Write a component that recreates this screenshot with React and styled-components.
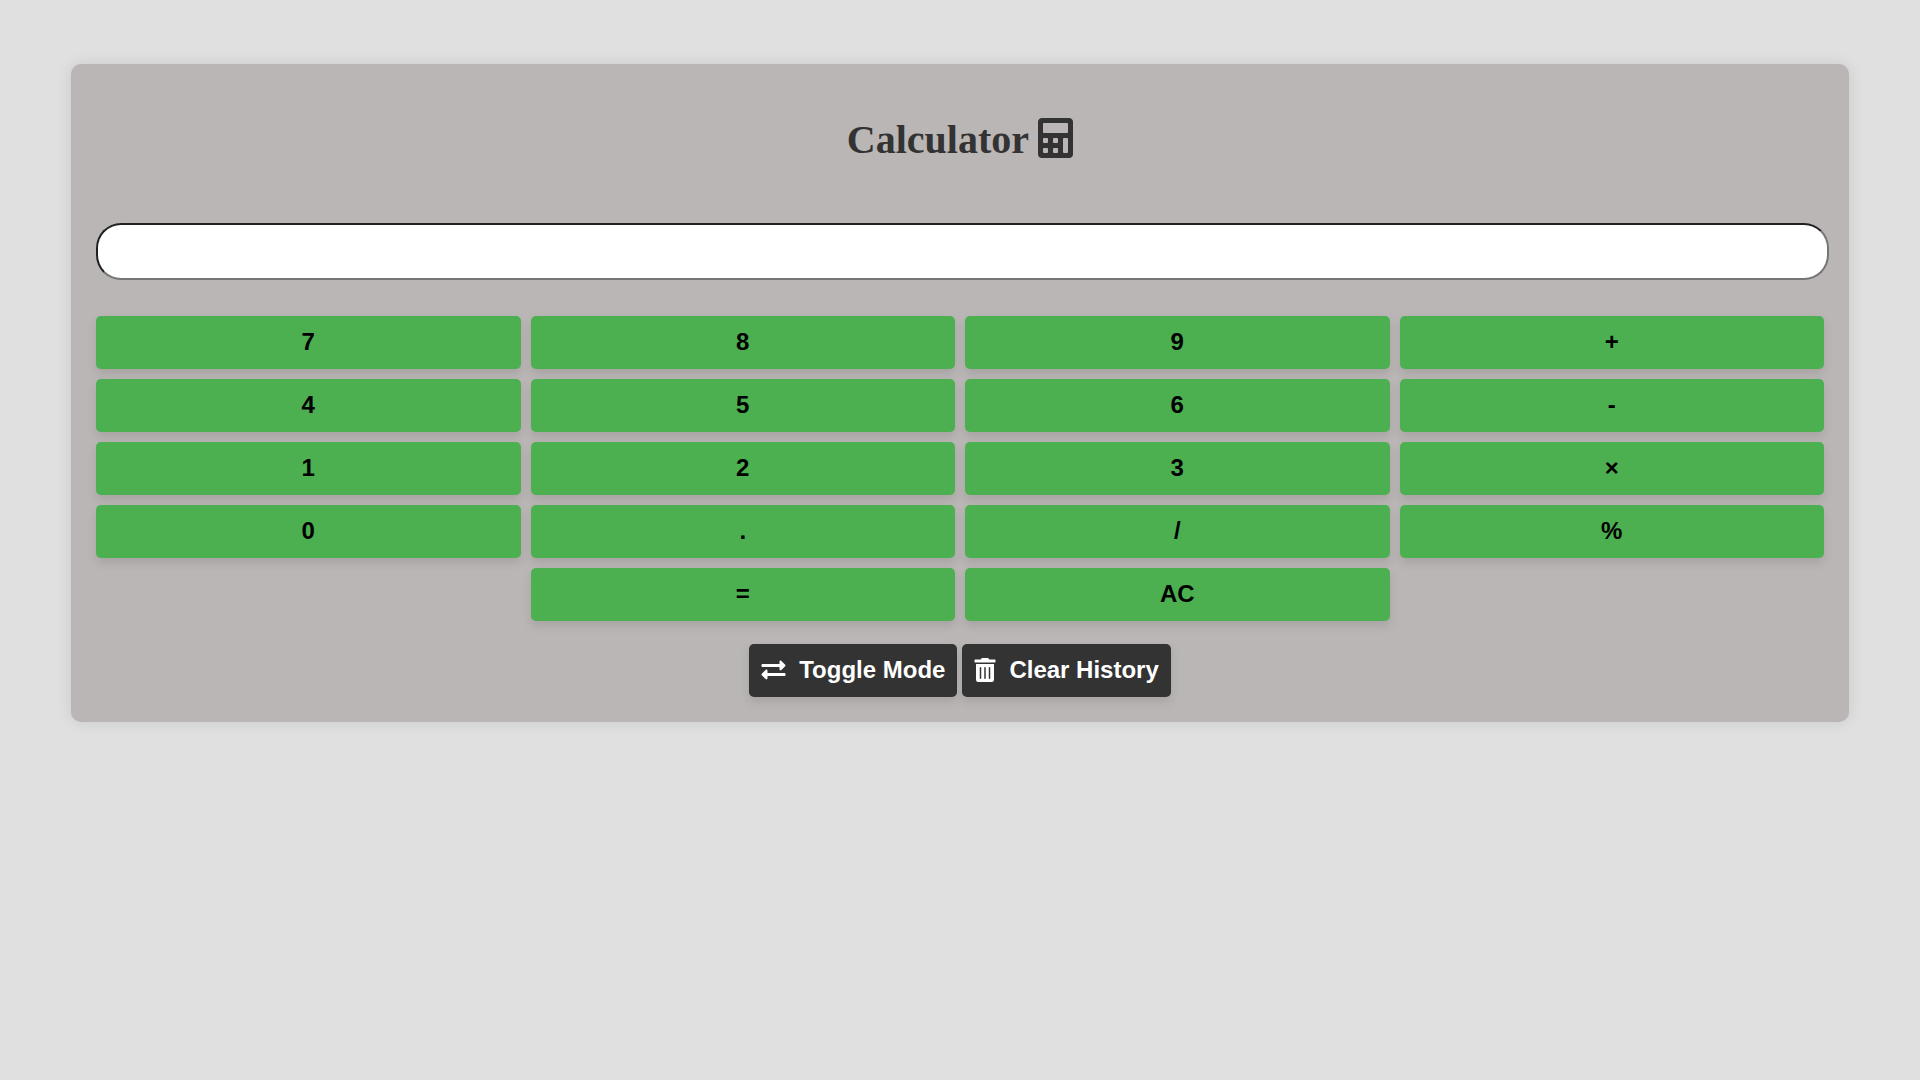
import React, { useState } from "react";
import styled, { createGlobalStyle } from "styled-components";
import { FaCalculator, FaExchangeAlt, FaTrashAlt } from "react-icons/fa";

const GlobalStyle = createGlobalStyle`
  body {
    margin: 0;
    background: #e0e0e0;
    font-family: "Liberation Serif", "Times New Roman", serif;
  }
`;

const Card = styled.main`
  display: flex;
  flex-direction: column;
  margin: 64px 71px;
  padding: 25px;
  border-radius: 10px;
  background: #bab6b5;
  box-shadow: 0 0 15px rgba(0, 0, 0, 0.1);
`;

const Title = styled.h1`
  margin: 28px 0 60px;
  color: #333;
  font-size: 40px;
  line-height: 46px;
  text-align: center;

  svg {
    width: 35px;
    vertical-align: -5px;
  }
`;

const Display = styled.input`
  box-sizing: border-box;
  width: calc(100% + 5px);
  height: 57px;
  padding: 0 20px;
  border: 2px inset #767676;
  border-radius: 25px;
  background: #fff;
  color: #000;
  font: 24px "Liberation Sans", Arial, sans-serif;
  text-align: right;
`;

const Keypad = styled.div`
  display: grid;
  grid-template-columns: repeat(4, 1fr);
  gap: 10px;
  margin: 36px 0 23px;
`;

const Button = styled.button`
  padding: 12px 12px 14px;
  border: none;
  border-radius: 5px;
  background: #4caf50;
  box-shadow: 0 5px 10px rgba(0, 0, 0, 0.1);
  color: #000;
  font: bold 24px/27px "Liberation Sans", Arial, sans-serif;
  cursor: pointer;
`;

const Key = styled(Button)`
  grid-column-start: ${({ $column }) => $column || "auto"};
`;

const Actions = styled.div`
  display: flex;
  justify-content: center;
  gap: 5px;
`;

const ActionButton = styled(Button)`
  display: flex;
  align-items: center;
  gap: 13px;
  background: #333;
  color: #fff;

  svg {
    width: ${({ $iconWidth }) => $iconWidth};
    height: 24px;
  }
`;

const KEYS = ["7", "8", "9", "+", "4", "5", "6", "-", "1", "2", "3", "×", "0", ".", "/", "%"];

function evaluate(expression) {
  const source = expression.replace(/×/g, "*");
  if (!/^[\d+\-*/%.\s]+$/.test(source)) return "";
  try {
    return String(Function(`return (${source})`)());
  } catch {
    return "Error";
  }
}

export default function App() {
  const [value, setValue] = useState("");

  return (
    <>
      <GlobalStyle />
      <Card>
        <Title>
          Calculator <FaCalculator aria-hidden="true" />
        </Title>
        <Display
          type="text"
          aria-label="Calculator display"
          value={value}
          onChange={(event) => setValue(event.target.value)}
        />
        <Keypad>
          {KEYS.map((key) => (
            <Key key={key} type="button" onClick={() => setValue(value + key)}>
              {key}
            </Key>
          ))}
          <Key $column={2} type="button" onClick={() => setValue(evaluate(value))}>
            =
          </Key>
          <Key type="button" onClick={() => setValue("")}>
            AC
          </Key>
        </Keypad>
        <Actions>
          <ActionButton type="button" $iconWidth="25px">
            <FaExchangeAlt aria-hidden="true" />
            Toggle Mode
          </ActionButton>
          <ActionButton type="button" $iconWidth="22px">
            <FaTrashAlt aria-hidden="true" />
            Clear History
          </ActionButton>
        </Actions>
      </Card>
    </>
  );
}
